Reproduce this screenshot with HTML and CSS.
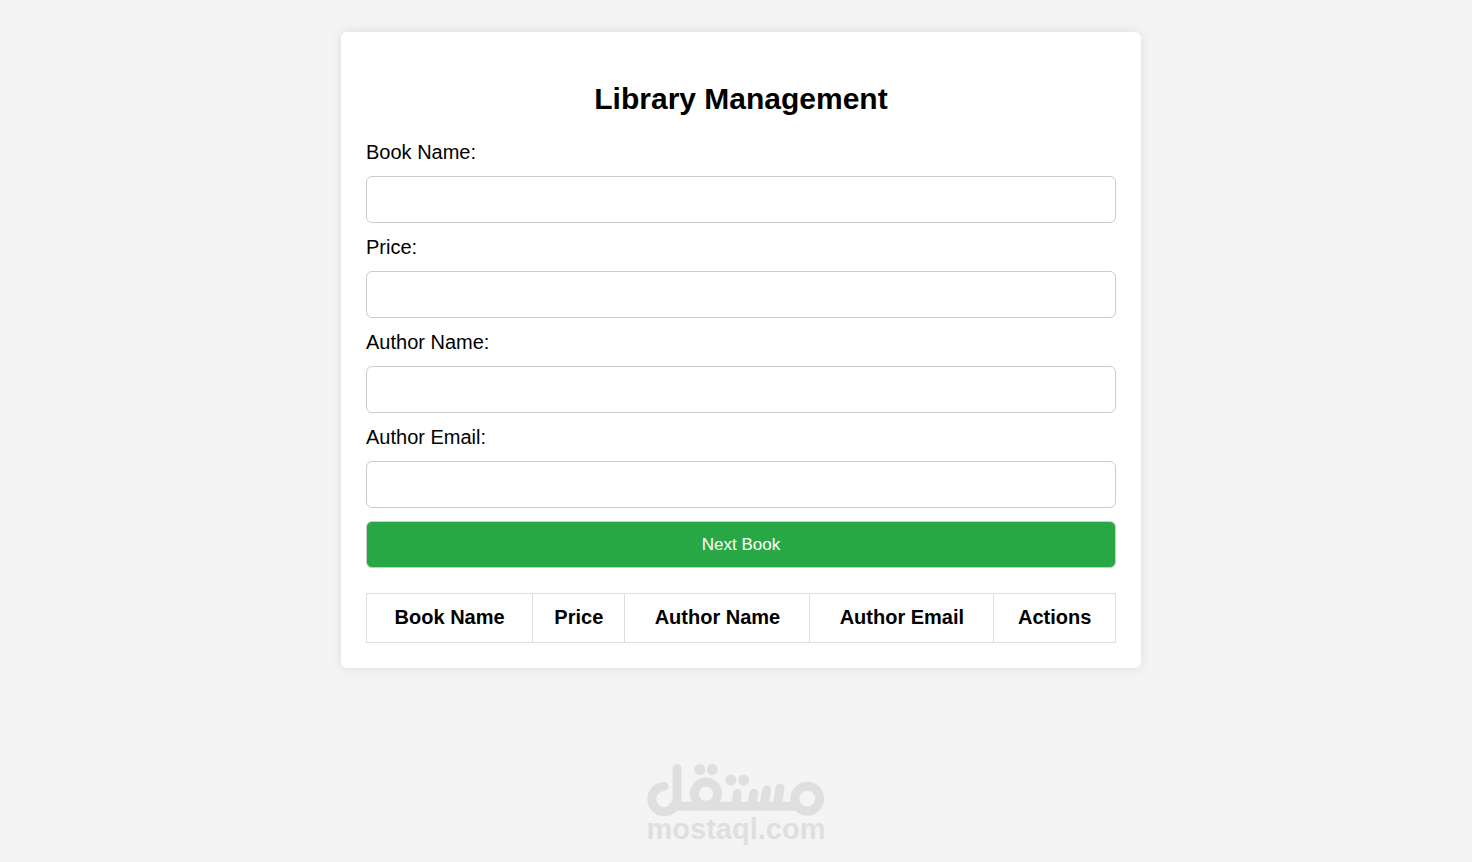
FILE: index.html
```
<!DOCTYPE html>
<html lang="en">
<head>
  <meta charset="UTF-8">
  <meta name="viewport" content="width=device-width, initial-scale=1.0">
  <title>Library Management</title>
  <link rel="stylesheet" href="styles.css">
</head>
<body>

  <main>
    <div class="container">
      <h1>Library Management</h1>

      <form id="bookForm">
        <label for="bookName">Book Name:</label>
        <input type="text" id="bookName" required>

        <label for="price">Price:</label>
        <input type="number" id="price" required>

        <label for="authorName">Author Name:</label>
        <input type="text" id="authorName" required>

        <label for="authorEmail">Author Email:</label>
        <input type="email" id="authorEmail" required>

        <button type="submit">Next Book</button>
      </form>

      <table>
        <thead>
          <tr>
            <th>Book Name</th>
            <th>Price</th>
            <th>Author Name</th>
            <th>Author Email</th>
            <th>Actions</th>
          </tr>
        </thead>
        <tbody id="bookList"></tbody>
      </table>
    </div>
  </main>

  <footer class="brand">
    <svg class="brand-logo" viewBox="0 0 178 52" role="img" aria-label="مستقل">
      <g class="strokes">
        <path d="M17 22.5A12.6 12.6 0 1 0 30 35V4.5"/>
        <path d="M26 42.2H148"/>
        <circle cx="59" cy="29.7" r="11.6"/>
        <path d="M90.3 29.5L88.8 42M107 29.3L104.5 42M119.7 26L117 42M133 24L130 42"/>
        <circle cx="160.3" cy="34.7" r="12.4"/>
      </g>
      <circle cx="52.7" cy="5.5" r="5.5"/>
      <circle cx="65.3" cy="5.5" r="5.5"/>
      <circle cx="84" cy="16" r="5.5"/>
      <circle cx="96.7" cy="16" r="5.5"/>
    </svg>
    <span>mostaql.com</span>
  </footer>

  <script>
    document.getElementById("bookForm").addEventListener("submit", function (e) {
      e.preventDefault();
      const row = document.getElementById("bookList").insertRow();
      ["bookName", "price", "authorName", "authorEmail"].forEach(id => {
        row.insertCell().textContent = document.getElementById(id).value;
      });
      const del = document.createElement("button");
      del.textContent = "Delete";
      del.addEventListener("click", () => row.remove());
      row.insertCell().appendChild(del);
      this.reset();
    });
  </script>
</body>
</html>
```
FILE: styles.css
```
body {
  font-family: Arial, "Liberation Sans", sans-serif;
  font-size: 20px;
  line-height: 23px;
  margin: 0;
  background: #f4f4f4;
  color: #000;
}
main {
  padding: 32px 0 0 10px;
}
.container {
  box-sizing: border-box;
  max-width: 800px;
  margin: 0 auto;
  padding: 25px;
  background: #fff;
  border-radius: 6px;
  box-shadow: 0 0 12px rgba(0, 0, 0, 0.1);
}
h1 {
  margin: 24px 0 25px;
  font-size: 30px;
  line-height: 35px;
  text-align: center;
}
form {
  display: flex;
  flex-direction: column;
}
label {
  margin-bottom: 12px;
}
input,
form button {
  box-sizing: border-box;
  width: 100%;
  height: 47px;
  margin: 0 0 13px;
  padding: 12px;
  border: 1px solid #ccc;
  border-radius: 6px;
  font-family: inherit;
  font-size: 17px;
  line-height: 20px;
}
form button {
  margin-bottom: 25px;
  background: #28a745;
  color: #fff;
  cursor: pointer;
}
form button:hover {
  background: #218838;
}
table {
  width: 100%;
  border-collapse: collapse;
}
th,
td {
  padding: 12px 13px 13px;
  border: 1px solid #ddd;
  text-align: center;
}
.brand {
  display: flex;
  flex-direction: column;
  align-items: center;
  margin-top: 96px;
  color: #dfdfdf;
  font-size: 29px;
  font-weight: bold;
  line-height: 34px;
}
.brand-logo {
  width: 178px;
  height: 52px;
  margin-bottom: -4px;
  fill: currentColor;
}
.strokes {
  fill: none;
  stroke: currentColor;
  stroke-width: 9;
  stroke-linecap: round;
}
```
